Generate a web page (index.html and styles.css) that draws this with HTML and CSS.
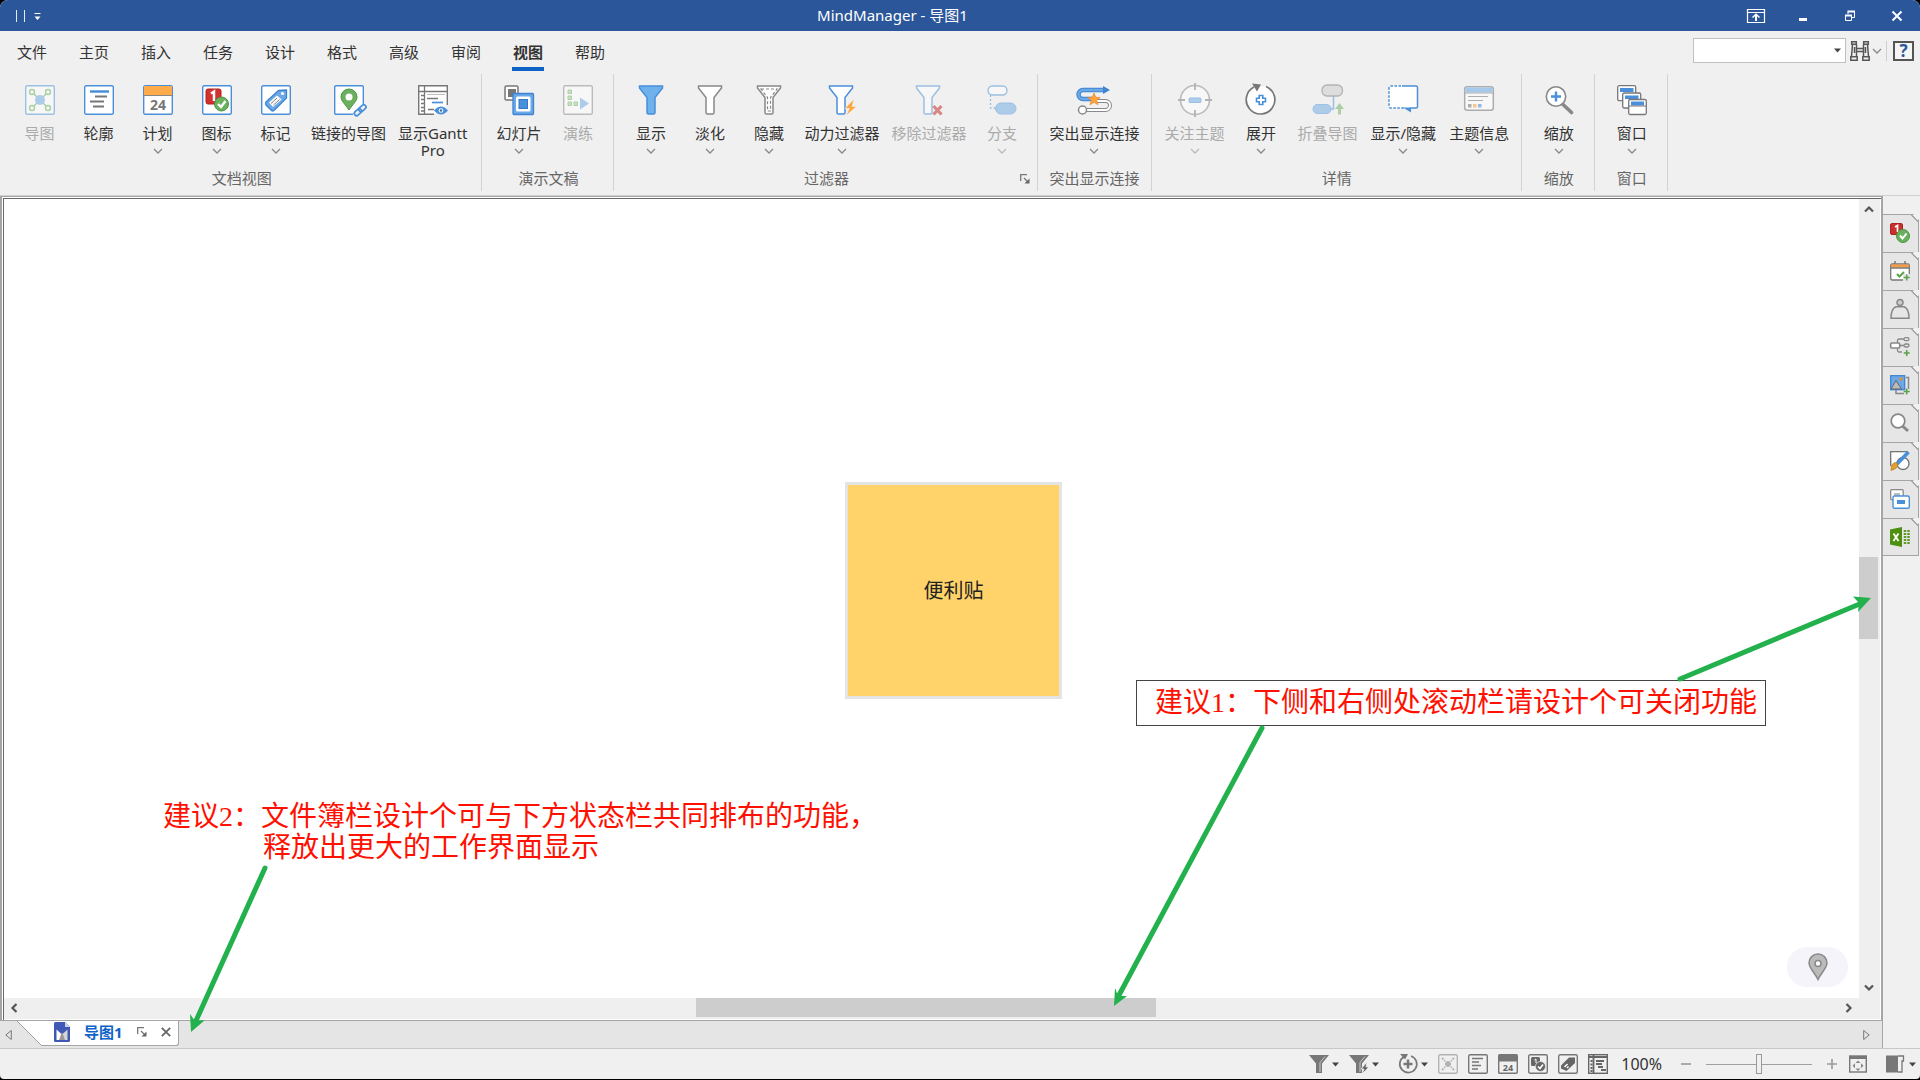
FILE: index.html
```
<!DOCTYPE html>
<html lang="zh-CN">
<head>
    <meta charset="UTF-8">
    <meta name="viewport" content="width=device-width, initial-scale=1.0">
    <title>MindManager - 导图1</title>
    <link rel="stylesheet" href="styles.css">
</head>
<body>

<!-- Shared small glyphs -->
<svg class="sprite" aria-hidden="true">
    <symbol id="chev" viewBox="0 0 10 6"><path d="M1 1l4 4 4-4" fill="none" stroke="currentColor" stroke-width="1.3"/></symbol>
    <symbol id="arrow" viewBox="0 0 10 8"><path d="M1 6.5l4-4 4 4" fill="none" stroke="#555" stroke-width="2.2"/></symbol>
    <symbol id="caret" viewBox="0 0 7 5"><path d="M0 .5h7L3.500 4.500z" fill="#444"/></symbol>
    <symbol id="popout" viewBox="0 0 10 10"><path d="M.7 7V.7H7M4 4l4 4" fill="none" stroke="#777" stroke-width="1.3"/><path d="M9.500 4.500v5h-5z" fill="#666"/></symbol>
    <symbol id="funnel" viewBox="0 0 26 30"><path d="M1.500 1h23v2L17 12.500V27.500q0 1.500-1.500 1.500h-5Q9 29 9 27.500V12.500L1.500 3z"/></symbol>
</svg>

<div class="app">
    <header class="titlebar">
        <div class="quick">
            <svg width="30" height="14" viewBox="0 0 30 14"><path d="M.5 1v12M8.500 1v12" stroke="#e5ebf5"/><path d="M18.500 4.500h6" stroke="#fff" stroke-width="1.2"/><path d="M18.500 7.500h6l-3 3.500z" fill="#fff"/></svg>
        </div>
        <h1 class="title">MindManager - 导图1</h1>
        <div class="window-buttons">
            <button aria-label="功能区显示选项"><svg width="18" height="14" viewBox="0 0 18 14" fill="none" stroke="#fff"><path d="M.5.5h17v13H.5zM.5 3.500h17" stroke-width="1.200"/><path d="M9 12V6" stroke-width="2"/><path d="M5.500 8.500L9 5.200l3.500 3.300" stroke-width="1.500"/></svg></button>
            <button aria-label="最小化"><svg width="10" height="12" viewBox="0 0 10 12"><path d="M1 8h8v3H1z" fill="#fff"/></svg></button>
            <button aria-label="还原"><svg width="12" height="12" viewBox="0 0 12 12" fill="none" stroke="#fff"><path d="M1.500 5.500h6v5h-6z"/><path d="M1 5.500h7" stroke-width="2"/><path d="M4 4V1.500h6.500v6H8"/><path d="M3.500 1.500h7.500" stroke-width="2"/></svg></button>
            <button aria-label="关闭"><svg width="12" height="12" viewBox="0 0 12 12"><path d="M1.500 1.500l9 9M10.500 1.500l-9 9" stroke="#fff" stroke-width="2"/></svg></button>
        </div>
    </header>

    <div class="menubar">
        <nav class="menu">
            <button>文件</button>
            <button>主页</button>
            <button>插入</button>
            <button>任务</button>
            <button>设计</button>
            <button>格式</button>
            <button>高级</button>
            <button>审阅</button>
            <button class="active">视图</button>
            <button>帮助</button>
        </nav>
        <div class="search">
            <div class="search-box">
                <input type="text" aria-label="查找">
                <button aria-label="查找历史"><svg width="7" height="5"><use href="#caret"/></svg></button>
            </div>
            <button class="find" aria-label="查找">
                <svg width="20" height="20" viewBox="0 0 20 20" fill="none" stroke="#555" stroke-width="1.500"><path d="M1.700.8h4.600v2.500H1.700zM13.700.8h4.600v2.500h-4.600zM2.500 3.500L1.500 15.500M6.500 3.500v12M17.500 3.500l1 12M13.500 3.500v12M.8 15.700h6.400v3.500H.8zM12.800 15.700h6.400v3.500h-6.400zM4.500 6v6M15.500 6v6M6 7.500h8M6 10.500h8"/></svg>
                <svg class="chev" width="10" height="6"><use href="#chev"/></svg>
            </button>
            <button class="help" aria-label="帮助">?</button>
        </div>
    </div>

    <div class="ribbon">
        <section class="group first">
            <div class="tools">
                <button class="tool" disabled>
                    <svg class="icon" viewBox="0 0 30 30"><rect x=".7" y=".7" width="28.600" height="28.600" rx="1.500" fill="#fff" stroke="#4a8fd9" stroke-width="1.400"/><g fill="none" stroke="#6bb05f" stroke-width="1.500"><path d="M9 9l12 12M21 9L9 21"/><circle cx="7" cy="7" r="2.500"/><circle cx="23" cy="7" r="2.500"/><circle cx="7" cy="23" r="2.500"/><circle cx="23" cy="23" r="2.500"/></g><circle cx="15" cy="15" r="5" fill="#6ba9e6"/></svg>
                    <span>导图</span>
                </button>
                <button class="tool">
                    <svg class="icon" viewBox="0 0 30 30"><rect x=".7" y=".7" width="28.600" height="28.600" rx="1.500" fill="#fff" stroke="#4a8fd9" stroke-width="1.400"/><path d="M6 6.500h19" stroke="#4a8fd9" stroke-width="2.500"/><path d="M11 11.500h12M6 16.500h14M9 21.500h11" stroke="#777" stroke-width="2"/></svg>
                    <span>轮廓</span>
                </button>
                <button class="tool">
                    <svg class="icon" viewBox="0 0 30 30"><rect x=".7" y=".7" width="28.600" height="28.600" rx="1.500" fill="#fff" stroke="#4a8fd9" stroke-width="1.400"/><path d="M1 1h28v9H1z" fill="#ffab4a"/><path d="M1 10.500h28" stroke="#888"/><text x="15" y="25" text-anchor="middle" class="cal-text">24</text></svg>
                    <span>计划</span>
                    <svg class="chev" width="10" height="6"><use href="#chev"/></svg>
                </button>
                <button class="tool">
                    <svg class="icon" viewBox="0 0 30 30"><rect x=".7" y=".7" width="28.600" height="28.600" rx="1.500" fill="#fff" stroke="#4a8fd9" stroke-width="1.400"/><rect x="4" y="4" width="15" height="15" rx="2" fill="#d2322d" stroke="#b3201c"/><path d="M9 8.500l3-2v9.500" fill="none" stroke="#fff" stroke-width="2.500"/><circle cx="19.500" cy="19" r="7" fill="#6bb05f" stroke="#4f9445"/><path d="M16 19l3 3 4.500-6" fill="none" stroke="#fff" stroke-width="2.400"/></svg>
                    <span>图标</span>
                    <svg class="chev" width="10" height="6"><use href="#chev"/></svg>
                </button>
                <button class="tool">
                    <svg class="icon" viewBox="0 0 30 30"><rect x=".7" y=".7" width="28.600" height="28.600" rx="1.500" fill="#fff" stroke="#4a8fd9" stroke-width="1.400"/><path d="M5 17L17.500 5.500l8-.5v8L13 25.500q-1.500 1-2.500 0L5 20q-1-1.500 0-3z" fill="#6ba9e6" stroke="#3f83d1" stroke-width="1.300"/><path d="M8 17.500l8-7 4.500 4-8.500 7.500z" fill="#fff"/><path d="M10 18.500l6-5.500M12.500 20l6-5.500" stroke="#777"/><circle cx="21.500" cy="8.500" r="1.600" fill="#fff"/></svg>
                    <span>标记</span>
                    <svg class="chev" width="10" height="6"><use href="#chev"/></svg>
                </button>
                <button class="tool">
                    <svg class="icon" viewBox="0 0 30 30"><path d="M19 29.300H2q-1.300 0-1.300-1.300V2Q.7.7 2 .7h26q1.300 0 1.300 1.300v17" fill="#fff" stroke="#4a8fd9" stroke-width="1.400"/><path d="M15 25C11 19 7 16 7 12a8 8 0 0 1 16 0c0 4-4 7-8 13z" fill="#6bb05f" stroke="#4f9445"/><circle cx="15" cy="12" r="3.500" fill="#fff"/><g fill="none" stroke="#4a8fd9" stroke-width="1.700" transform="rotate(-42 26 25)"><rect x="19" y="23" width="8" height="4.500" rx="2.200"/><rect x="25" y="23" width="8" height="4.500" rx="2.200"/></g></svg>
                    <span>链接的导图</span>
                </button>
                <button class="tool">
                    <svg class="icon" viewBox="0 0 30 30"><path d="M16 29.300H.7V.7h28.600V20" fill="#fff" stroke="#777" stroke-width="1.400"/><path d="M1 6.500h28M6.500 1v28" stroke="#777" stroke-width="1.300" fill="none"/><path d="M9 9.500h18" stroke="#bbb"/><path d="M3 10.500h3M3 14.500h3M3 18.500h3M3 22.500h3M3 26h3M9 13.500h11M10 24.500h6" stroke="#777" stroke-width="1.700"/><path d="M14 17.500h11" stroke="#4a8fd9" stroke-width="1.700"/><path d="M16 25.500q7-8 14 0-7 8-14 0z" fill="#4a8fd9"/><circle cx="23" cy="25.500" r="2.300" fill="#fff"/><circle cx="23" cy="25.500" r="1.200" fill="#2f6fb8"/></svg>
                    <span>显示Gantt<br>Pro</span>
                </button>
            </div>
            <h2>文档视图</h2>
        </section>

        <section class="group">
            <div class="tools">
                <button class="tool">
                    <svg class="icon" viewBox="0 0 30 30"><rect x="1" y="1" width="13" height="14" rx="1.500" fill="#fff" stroke="#777" stroke-width="1.500"/><rect x="4" y="4" width="8" height="8" fill="#777"/><rect x="9" y="8.500" width="20.500" height="21" rx="1" fill="#6ba9e6" stroke="#3f83d1" stroke-width="1.300"/><rect x="12" y="11.500" width="14.500" height="15" rx="1.500" fill="#fff"/><rect x="15" y="14.500" width="8.500" height="9" fill="#4a8fd9" stroke="#2f78cc"/></svg>
                    <span>幻灯片</span>
                    <svg class="chev" width="10" height="6"><use href="#chev"/></svg>
                </button>
                <button class="tool" disabled>
                    <svg class="icon" viewBox="0 0 30 30"><rect x=".7" y=".7" width="28.600" height="28.600" rx="1.500" fill="#fff" stroke="#888" stroke-width="1.400"/><g fill="#a5d29a" stroke="#6bb05f"><path d="M5 5h3.500v3.500H5zM5 11h3.500v3.500H5zM5 17h3.500v3.500H5zM11 17h3.500v3.500H11z"/></g><path d="M17 12.500l9 6-9 6z" fill="#6ba9e6"/></svg>
                    <span>演练</span>
                </button>
            </div>
            <h2>演示文稿</h2>
        </section>

        <section class="group">
            <div class="tools">
                <button class="tool">
                    <svg class="icon" viewBox="0 0 30 30"><use href="#funnel" x="2" width="26" height="30" fill="#6fb1ea" stroke="#4a8fd9" stroke-width="1.500"/></svg>
                    <span>显示</span>
                    <svg class="chev" width="10" height="6"><use href="#chev"/></svg>
                </button>
                <button class="tool">
                    <svg class="icon" viewBox="0 0 30 30"><use href="#funnel" x="2" width="26" height="30" fill="#fff" stroke="#888" stroke-width="1.500"/></svg>
                    <span>淡化</span>
                    <svg class="chev" width="10" height="6"><use href="#chev"/></svg>
                </button>
                <button class="tool">
                    <svg class="icon" viewBox="0 0 30 30"><use href="#funnel" x="2" width="26" height="30" fill="#fff" stroke="#888" stroke-width="1.500"/><path d="M7 4h16l-6.500 8.500V26h-3V12.500z" fill="none" stroke="#888" stroke-width="1.200" stroke-dasharray="3 2"/></svg>
                    <span>隐藏</span>
                    <svg class="chev" width="10" height="6"><use href="#chev"/></svg>
                </button>
                <button class="tool">
                    <svg class="icon" viewBox="0 0 30 30"><use href="#funnel" x="1" width="26" height="30" fill="#fff" stroke="#4a8fd9" stroke-width="1.500"/><path d="M27 14l-9 9.500h4.500L19 30.500l10.500-9H25z" fill="#ffa33a" stroke="#f0f0f0" stroke-width=".6"/></svg>
                    <span>动力过滤器</span>
                    <svg class="chev" width="10" height="6"><use href="#chev"/></svg>
                </button>
                <button class="tool" disabled>
                    <svg class="icon" viewBox="0 0 30 30"><use href="#funnel" x="1" width="26" height="30" fill="#fff" stroke="#4a8fd9" stroke-width="1.500"/><path d="M19.500 21l8 8.500M27.500 21l-8 8.500" stroke="#c4201c" stroke-width="3.200"/></svg>
                    <span>移除过滤器</span>
                </button>
                <button class="tool" disabled>
                    <svg class="icon" viewBox="0 0 30 30"><rect x="1" y="1" width="19" height="9" rx="4.500" fill="#fff" stroke="#4a8fd9" stroke-width="1.400"/><path d="M3.500 10v13H9" fill="none" stroke="#4a8fd9" stroke-width="1.300" stroke-dasharray="2 2"/><rect x="8.500" y="18" width="20.500" height="11" rx="5.500" fill="#6ba9e6" stroke="#4a8fd9"/></svg>
                    <span>分支</span>
                    <svg class="chev" width="10" height="6"><use href="#chev"/></svg>
                </button>
            </div>
            <h2>过滤器</h2>
            <button class="launcher" aria-label="过滤器选项"><svg width="10" height="10"><use href="#popout"/></svg></button>
        </section>

        <section class="group tight">
            <div class="tools">
                <button class="tool">
                    <svg class="icon" viewBox="0 0 30 30"><path d="M26 5H4a4.500 4.500 0 0 0 0 9H13" fill="none" stroke="#3f83d1" stroke-width="4.400"/><path d="M26 5H4a4.500 4.500 0 0 0 0 9H13" fill="none" stroke="#6ba9e6" stroke-width="2.400"/><path d="M24 1l7 4-7 4z" fill="#3f83d1"/><path d="M17 16h9.500a4.500 4.500 0 0 1 0 9H4" fill="none" stroke="#888" stroke-width="4"/><path d="M17 16h9.500a4.500 4.500 0 0 1 0 9H4" fill="none" stroke="#fff" stroke-width="2"/><circle cx="3.500" cy="25" r="4" fill="#fff" stroke="#888" stroke-width="1.500"/><path d="M15 8l1.700 4.200 4.500.3-3.500 2.800 1.200 4.400-3.900-2.400-3.900 2.400 1.200-4.400-3.500-2.800 4.500-.3z" fill="#ffa33a" stroke="#e8862a" stroke-width=".7"/></svg>
                    <span>突出显示连接</span>
                    <svg class="chev" width="10" height="6"><use href="#chev"/></svg>
                </button>
            </div>
            <h2>突出显示连接</h2>
        </section>

        <section class="group spaced">
            <div class="tools">
                <button class="tool" disabled>
                    <svg class="icon" viewBox="0 0 30 30"><circle cx="15" cy="15" r="14.500" fill="#fff" stroke="#888" stroke-width="1.600"/><path d="M15-2v7M15 25v7M-2 15h7M25 15h7" stroke="#777" stroke-width="1.800"/><rect x="9" y="13" width="12" height="4.500" rx="1" fill="#6ba9e6" stroke="#4a8fd9"/></svg>
                    <span>关注主题</span>
                    <svg class="chev" width="10" height="6"><use href="#chev"/></svg>
                </button>
                <button class="tool">
                    <svg class="icon" viewBox="0 0 30 30"><path d="M20 1.500a14.300 14.300 0 1 1-12 .5" fill="#fff" stroke="#777" stroke-width="1.700"/><path d="M6-1.500l9 1-4 7z" fill="#777"/><path d="M13.200 10.500h3.600v2.700h2.700v3.600h-2.700v2.700h-3.600v-2.700h-2.700v-3.600h2.700z" fill="#fff" stroke="#4a8fd9" stroke-width="1.600"/></svg>
                    <span>展开</span>
                    <svg class="chev" width="10" height="6"><use href="#chev"/></svg>
                </button>
                <button class="tool" disabled>
                    <svg class="icon" viewBox="0 0 30 30"><path d="M20.500 11v13H17" fill="none" stroke="#4a8fd9" stroke-width="1.500"/><rect x="9" y="0" width="20.500" height="11" rx="5" fill="#ccc" stroke="#777" stroke-width="1.300"/><rect x="0" y="19.500" width="18" height="9" rx="4.500" fill="#6ba9e6" stroke="#4a8fd9"/><path d="M26.500 18l4.500 6h-3v5.500h-3V24h-3z" fill="#6bb05f"/></svg>
                    <span>折叠导图</span>
                </button>
                <button class="tool">
                    <svg class="icon" viewBox="0 0 30 30"><path d="M1 2.500Q1 1 3 1h25q2 0 2 2v18q0 2-2 2H3q-2 0-2-2z" fill="#fff"/><path d="M13 1H3Q1 1 1 3v18q0 2 2 2h13" fill="none" stroke="#4a8fd9" stroke-width="1.500" stroke-dasharray="2.500 1.500"/><path d="M14 1h14q1.500 0 1.500 1.500v19q0 1.500-1.500 1.500h-6" fill="none" stroke="#4a8fd9" stroke-width="1.500"/><path d="M15 22.500h8v5z" fill="#4a8fd9"/></svg>
                    <span>显示/隐藏</span>
                    <svg class="chev" width="10" height="6"><use href="#chev"/></svg>
                </button>
                <button class="tool">
                    <svg class="icon faded" viewBox="0 0 30 30"><rect x=".7" y="1.700" width="28.600" height="23.600" rx="2.500" fill="#fff" stroke="#777" stroke-width="1.500"/><path d="M1.500 2.500h27v5h-27z" fill="#6ba9e6"/><path d="M1 8h28M4 11.500h20M4 15.500h15" stroke="#777"/><path d="M4 19h3.500v3.500H4z" fill="#777"/><path d="M9 19h3.500v3.500H9z" fill="#ffa33a"/><path d="M14 19h3.500v3.500H14z" fill="#4a8fd9"/></svg>
                    <span>主题信息</span>
                    <svg class="chev" width="10" height="6"><use href="#chev"/></svg>
                </button>
            </div>
            <h2>详情</h2>
        </section>

        <section class="group">
            <div class="tools">
                <button class="tool">
                    <svg class="icon" viewBox="0 0 30 30"><path d="M18.500 19l9 8.500" stroke="#888" stroke-width="3.600" stroke-linecap="round"/><circle cx="12" cy="11.500" r="9.700" fill="#fff" stroke="#888" stroke-width="1.600"/><path d="M12 6.500v10M7 11.500h10" stroke="#4a8fd9" stroke-width="2.400"/></svg>
                    <span>缩放</span>
                    <svg class="chev" width="10" height="6"><use href="#chev"/></svg>
                </button>
            </div>
            <h2>缩放</h2>
        </section>

        <section class="group">
            <div class="tools">
                <button class="tool">
                    <svg class="icon" viewBox="0 0 30 30"><g fill="#fff" stroke="#777" stroke-width="1.300"><rect x=".7" y=".7" width="18" height="15" rx="1.500"/><path d="M3 3h13.500v4H3z" fill="#4a8fd9" stroke="none"/><rect x="5.700" y="8" width="18" height="15" rx="1.500"/><path d="M8 10.500h13.500v3.500H8z" fill="#4a8fd9" stroke="none"/><rect x="11.700" y="14.500" width="17.600" height="15" rx="1.500"/></g><path d="M14 16.500h13v4H14z" fill="#4a8fd9"/><path d="M12 21h17" stroke="#777"/></svg>
                    <span>窗口</span>
                    <svg class="chev" width="10" height="6"><use href="#chev"/></svg>
                </button>
            </div>
            <h2>窗口</h2>
        </section>
    </div>

    <div class="workspace">
        <div class="document">
            <div class="frame">
                <main class="canvas">
                    <div class="sticky">便利贴</div>
                    <p class="note boxed">建议1：下侧和右侧处滚动栏请设计个可关闭功能</p>
                    <p class="note plain">建议2：文件簿栏设计个可与下方状态栏共同排布的功能，<br><span class="indent">释放出更大的工作界面显示</span></p>
                    <button class="locate" aria-label="定位"><svg width="22" height="28" viewBox="0 0 22 28"><path d="M11 26.500C8 20 2 15 2 10a9 9 0 0 1 18 0c0 5-6 10-9 16.500z" fill="#bbb" stroke="#8a8a8a" stroke-width="1.500"/><circle cx="11" cy="10.500" r="3" fill="#fff" stroke="#8a8a8a" stroke-width="1.600"/></svg></button>
                    <!-- hand drawn arrows run over the scrollbars -->
                    <svg class="arrows" width="1876" height="880" viewBox="4 200 1876 880">
                        <g stroke="#22b14c" stroke-width="5" stroke-linecap="round"><path d="M1680 680L1862 604"/><path d="M1262 729L1118 998"/><path d="M265 869L195 1024"/></g>
                        <g fill="#22b14c"><path d="M1871 599l-18-1.500 6 6.500-1 9z"/><path d="M1114 1007l1-18 3 8 9 0z"/><path d="M191 1033l-1-18 5 7 10-1z"/></g>
                    </svg>
                </main>
                <div class="scroll-v">
                    <button aria-label="向上滚动"><svg width="10" height="8"><use href="#arrow"/></svg></button>
                    <div class="track"><div class="thumb"></div></div>
                    <button class="down" aria-label="向下滚动"><svg width="10" height="8"><use href="#arrow"/></svg></button>
                </div>
                <div class="scroll-h">
                    <button class="left" aria-label="向左滚动"><svg width="10" height="8"><use href="#arrow"/></svg></button>
                    <div class="track"><div class="thumb"></div></div>
                    <button class="right" aria-label="向右滚动"><svg width="10" height="8"><use href="#arrow"/></svg></button>
                </div>
            </div>
            <div class="doc-tabs">
                <button class="page" aria-label="上一个"><svg width="7" height="12" viewBox="0 0 7 12"><path d="M6.300 1.500v9L.8 6z" fill="none" stroke="#777"/></svg></button>
                <svg class="slope" width="26" height="25" viewBox="0 0 26 25"><path d="M0 0L24.500 24.500H26V0z" fill="#fff"/><path d="M0 0L24.500 24.500H26" fill="none" stroke="#a0a0a0"/></svg>
                <div class="doc-tab">
                    <svg width="16" height="20" viewBox="0 0 16 20"><path d="M1.500 0H11l5 5v13.500q0 1.500-1.500 1.500h-13Q0 20 0 18.500v-17Q0 0 1.500 0z" fill="#3f57b5"/><path d="M11 0v5h5z" fill="#c9d1ee"/><path d="M2.500 7.500l5.500 5v5.500H2.500z" fill="#fff"/><path d="M13.500 7.500l-5.500 5v5.500h5.500z" fill="#d5d5d5"/><path d="M8 10l-3 8h6z" fill="#999"/></svg>
                    <a href="#">导图1</a>
                    <button aria-label="弹出"><svg width="10" height="10"><use href="#popout"/></svg></button>
                    <button aria-label="关闭导图"><svg width="10" height="10" viewBox="0 0 10 10"><path d="M.8.8l8.400 8.400M9.200.8L.8 9.200" stroke="#666" stroke-width="1.800"/></svg></button>
                </div>
                <button class="page next" aria-label="下一个"><svg width="7" height="12" viewBox="0 0 7 12"><path d="M.7 1.500v9L6.200 6z" fill="none" stroke="#777"/></svg></button>
            </div>
        </div>

        <aside class="side">
            <button aria-label="图标"><svg viewBox="0 0 20 20"><rect x=".5" y=".5" width="12" height="11" rx="1.500" fill="#c9302c" stroke="#a82420"/><path d="M5 4l2.500-1.500V9" fill="none" stroke="#fff" stroke-width="1.700"/><circle cx="13" cy="13" r="6.500" fill="#6bb05f" stroke="#4f9445"/><path d="M10 12.500l2.500 3 4-5" fill="none" stroke="#fff" stroke-width="2"/></svg></button>
            <button aria-label="任务信息"><svg viewBox="0 0 20 20"><rect x=".7" y="3" width="18.600" height="16" rx="1.500" fill="#fff" stroke="#777" stroke-width="1.300"/><path d="M1 3.500h18v3H1z" fill="#f79a45"/><path d="M1 7h18M5 0v3M15 0v3" stroke="#777" stroke-width="1.500"/><path d="M7 13l2.500 2.500L14 11" fill="none" stroke="#5aa34c" stroke-width="2"/><path d="M13 13h7v7h-7z" fill="#e6e6e6"/><path d="M16.700 13.500v6M13.700 16.500h6" stroke="#5aa34c" stroke-width="1.600"/></svg></button>
            <button aria-label="资源"><svg viewBox="0 0 20 20" fill="none" stroke="#888" stroke-width="1.500"><circle cx="10" cy="3.500" r="3" fill="#ccc"/><path d="M1 19.200q0-9.500 5-11.500h8q5 2 5 11.500z"/></svg></button>
            <button aria-label="导图部件"><svg viewBox="0 0 20 20" fill="none" stroke="#888" stroke-width="1.300"><rect x=".7" y="6" width="9" height="5" rx="1" fill="#fff" stroke-width="1.600"/><path d="M10 8.500h4M7.500 6V3.500Q7.500 2 9 2h5M7.500 11v2.500q0 1.500 1.500 1.500h3"/><rect x="14" y=".7" width="5" height="3" rx="1.500"/><rect x="14" y="7" width="5" height="3" rx="1.500"/><path d="M16.700 13v6M13.700 16h6" stroke="#5aa34c" stroke-width="1.600"/></svg></button>
            <button aria-label="图库"><svg viewBox="0 0 20 20"><path d="M6 15v3.500h8M16 2.500h2.500V14" fill="none" stroke="#888" stroke-width="1.500"/><rect x=".7" y=".7" width="14" height="14" fill="#6ba9e6" stroke="#3f83d1" stroke-width="1.300"/><path d="M1 14L6 5.500 11.500 14z" fill="#bbb" stroke="#666"/><circle cx="11" cy="4" r="1.700" fill="#e0922f"/><path d="M16.700 13.500v6M13.700 16.500h6" stroke="#5aa34c" stroke-width="1.600"/></svg></button>
            <button aria-label="搜索"><svg viewBox="0 0 20 20"><path d="M12.500 13l5.500 5" stroke="#888" stroke-width="3"/><circle cx="8" cy="8" r="6.800" fill="#fff" stroke="#888" stroke-width="1.700"/></svg></button>
            <button aria-label="主题样式"><svg viewBox="0 0 20 20"><path d="M.7 15V.7h17" fill="none" stroke="#777" stroke-width="1.400"/><path d="M1.500 1.500h15L2 16z" fill="#fff"/><circle cx="13" cy="12.500" r="6" fill="#fff" stroke="#777" stroke-width="1.400"/><path d="M18.500 1L7 13" stroke="#4a8fd9" stroke-width="3.600"/><path d="M7.500 12.500q1.500 5-6.500 7 0-7 4-8z" fill="#e0a030" stroke="#b77b1c" stroke-width=".7"/></svg></button>
            <button aria-label="幻灯片"><svg viewBox="0 0 20 20"><rect x=".7" y=".7" width="12.500" height="10" rx="1" fill="#fff" stroke="#888" stroke-width="1.300"/><path d="M4 4h6v4H4z" fill="#bbb"/><rect x="3" y="7" width="16.300" height="12.300" rx="1.500" fill="#fff" stroke="#4a8fd9" stroke-width="1.400"/><path d="M7 11h8v4H7z" fill="#4a8fd9"/></svg></button>
            <button aria-label="Excel"><svg viewBox="0 0 20 20"><path d="M0 2.500L12 0v20L0 17.500z" fill="#4f8f10"/><path d="M3.500 6.500l5 7.500M8.500 6.500l-5 7.500" stroke="#fff" stroke-width="1.800"/><path d="M15 3v14M18.500 3v14" stroke="#5f9b25" stroke-width="2.500" stroke-dasharray="2 1"/></svg></button>
        </aside>
    </div>

    <footer class="status">
        <button aria-label="过滤器"><svg width="20" height="20" viewBox="0 0 20 20"><path d="M0 1h20l-7 8.500V19H7V9.500z" fill="#777"/><path d="M16 2.500l-5 6V18" fill="none" stroke="#ccc"/></svg><svg width="7" height="5"><use href="#caret"/></svg></button>
        <button aria-label="动力过滤器"><svg width="20" height="20" viewBox="0 0 20 20"><path d="M0 1h20l-7 8.500V19H7V9.500z" fill="#777"/><path d="M16 2.500l-5 6V18" fill="none" stroke="#ccc"/><path d="M18 8l-6 7h3l-2 5 7-7h-3z" fill="#666" stroke="#f0f0f0" stroke-width=".8"/></svg><svg width="7" height="5"><use href="#caret"/></svg></button>
        <button class="expand" aria-label="展开"><svg width="20" height="20" viewBox="0 0 20 20" fill="none" stroke="#777"><path d="M13 2a8.500 8.500 0 1 1-7 .7" stroke-width="1.700"/><path d="M10 5.500v9M5.500 10h9" stroke-width="2.500"/><path d="M2 0h8L7 5.500z" fill="#777" stroke="none"/></svg><svg width="7" height="5"><use href="#caret"/></svg></button>
        <button aria-label="导图" disabled><svg width="20" height="20" viewBox="0 0 20 20" fill="none" stroke="#777"><rect x=".7" y=".7" width="18.600" height="18.600" rx="1.500" stroke-width="1.400"/><path d="M4 4l3 3M16 4l-3 3M4 16l3-3M16 16l-3-3" stroke-width="2" stroke-dasharray="2 1"/><circle cx="10" cy="10" r="3" fill="#777" stroke="none"/></svg></button>
        <button aria-label="轮廓"><svg width="20" height="20" viewBox="0 0 20 20" fill="none" stroke="#777"><rect x=".7" y=".7" width="18.600" height="18.600" rx="1.500" stroke-width="1.400"/><path d="M4 4.500h11M4 8h7M4 11.500h9M4 15h6" stroke-width="1.400"/></svg></button>
        <button aria-label="计划"><svg width="20" height="20" viewBox="0 0 20 20"><rect x=".7" y=".7" width="18.600" height="18.600" rx="1" fill="none" stroke="#777" stroke-width="1.400"/><path d="M1 1h18v6.500H1z" fill="#777"/><text x="10" y="16.500" text-anchor="middle" class="cal-small">24</text></svg></button>
        <button aria-label="图标"><svg width="20" height="20" viewBox="0 0 20 20"><rect x=".7" y=".7" width="18.600" height="18.600" rx="1.500" fill="none" stroke="#777" stroke-width="1.400"/><rect x="3" y="3" width="9" height="9" rx="1.500" fill="#666"/><path d="M6.500 6l1.500-1v4" fill="none" stroke="#fff"/><circle cx="12.500" cy="12.500" r="5" fill="#666" stroke="#f0f0f0" stroke-width=".7"/><path d="M10 12.500l2 2 3-4" fill="none" stroke="#fff" stroke-width="1.600"/></svg></button>
        <button aria-label="标记"><svg width="20" height="20" viewBox="0 0 20 20"><rect x=".7" y=".7" width="18.600" height="18.600" rx="1.500" fill="none" stroke="#777" stroke-width="1.400"/><path d="M3 11.500L11 3.500h6V9l-8.500 8L3 14.500z" fill="#666"/><path d="M6.500 13l3-3M9 14l1.500-1.500" stroke="#fff" stroke-width="1.500"/></svg></button>
        <button aria-label="Gantt"><svg width="20" height="20" viewBox="0 0 20 20"><rect x=".7" y=".7" width="18.600" height="18.600" fill="none" stroke="#666" stroke-width="1.400"/><path d="M1 3h18M5.500 1v18" stroke="#666" stroke-width="1.800"/><path d="M2.500 7h2M2.500 10.500h2M2.500 14h2M2.500 17h2M8 7h8M8 10h6M10 13h5M13 16h5" stroke="#666" stroke-width="1.800"/></svg></button>
        <span class="percent">100%</span>
        <div class="zoom">
            <button aria-label="缩小"><svg width="10" height="10" viewBox="0 0 10 10"><path d="M0 5h10" stroke="#999" stroke-width="1.600"/></svg></button>
            <input type="range" min="0" max="100" value="50" aria-label="缩放比例">
            <button aria-label="放大"><svg width="10" height="10" viewBox="0 0 10 10"><path d="M0 5h10M5 0v10" stroke="#999" stroke-width="1.600"/></svg></button>
        </div>
        <button aria-label="适合窗口"><svg width="18" height="18" viewBox="0 0 18 18"><rect x=".7" y="1" width="16.600" height="16" fill="none" stroke="#777" stroke-width="1.400"/><path d="M1 1h16v3H1z" fill="#777"/><path d="M9 5.500l2.500 2.500h-5zM9 16l2.500-2.500h-5zM3.500 10.700L6 8.200v5zM14.500 10.700L12 8.200v5z" fill="#888"/></svg></button>
        <button class="panel" aria-label="任务窗格"><svg width="20" height="20" viewBox="0 0 20 20"><path d="M0 1.500h12v17H0z" fill="#777"/><path d="M12 2h5.500v5H16v11h-4" fill="none" stroke="#777" stroke-width="1.300"/></svg><svg width="7" height="5"><use href="#caret"/></svg></button>
    </footer>
</div>

</body>
</html>
```
FILE: styles.css
```
* {
    box-sizing: border-box;
}
body {
    margin: 0;
    background: #000;
    font-family: "Noto Sans", "Noto Sans CJK SC", sans-serif;
    font-size: 15px;
    line-height: 17px;
    color: #333;
}
button {
    margin: 0;
    padding: 0;
    border: none;
    background: none;
    font: inherit;
    color: inherit;
    cursor: pointer;
}
h1, h2, p {
    margin: 0;
    font-weight: normal;
}
svg {
    display: block;
    overflow: visible;
    flex: none;
}
.sprite {
    position: absolute;
    width: 0;
    height: 0;
}
.app {
    display: flex;
    flex-direction: column;
    height: calc(100vh - 1px);
    background: #f0f0f0;
    border-radius: 8px 8px 4px 4px;
    overflow: hidden;
}

/* Title bar */
.titlebar {
    display: flex;
    align-items: center;
    height: 31px;
    background: #2b579a;
    color: #fff;
}
.quick {
    width: 53px;
    padding-left: 16px;
}
.title {
    flex: 1;
    text-align: center;
    font-size: 15px;
}
.window-buttons {
    display: flex;
}
.window-buttons button {
    display: grid;
    place-items: center;
    width: 47px;
    height: 31px;
}

/* Menu row */
.menubar {
    display: flex;
    justify-content: space-between;
    height: 41px;
    padding-left: 1px;
}
.menu {
    display: flex;
}
.menu button {
    position: relative;
    width: 62px;
    height: 41px;
    padding-top: 2px;
}
.menu .active {
    font-weight: bold;
}
.menu .active::after {
    content: "";
    position: absolute;
    left: 15px;
    right: 15px;
    bottom: 1px;
    height: 4px;
    background: #0f62c8;
}
.search {
    display: flex;
    align-items: center;
    gap: 4px;
    padding: 0 6px 2px 0;
}
.search-box {
    display: flex;
    width: 153px;
    height: 25px;
    background: #fff;
    border: 1px solid #c0c0c0;
}
.search-box input {
    flex: 1;
    min-width: 0;
    border: none;
    outline: none;
    background: none;
}
.search-box button {
    display: grid;
    place-items: center;
    width: 16px;
}
.find {
    display: flex;
    align-items: center;
    gap: 2px;
    padding-right: 4px;
    border-right: 1px solid #d0d0d0;
}
.help {
    width: 21px;
    height: 20px;
    margin-left: 2px;
    border: 2px solid #555;
    background: #f5f5f5;
    color: #2b579a;
    font-size: 17px;
    font-weight: bold;
    line-height: 16px;
}

/* Ribbon */
.ribbon {
    display: flex;
    padding: 2px 0 4px;
    border-bottom: 1px solid #d0d0d0;
}
.group {
    position: relative;
    display: flex;
    flex-direction: column;
    height: 117px;
    padding: 0 6px 0 7px;
    border-right: 1px solid #d2d2d2;
}
.group.first {
    padding: 0 8px 0 10px;
}
.group.tight {
    padding: 0 5px;
}
.group h2 {
    text-align: center;
    font-size: 15px;
    color: #666;
}
.tools {
    display: flex;
    height: 96px;
}
.spaced .tools {
    gap: 1px;
}
.tool {
    display: flex;
    flex-direction: column;
    align-items: center;
    min-width: 59px;
    padding: 11px 6px 0;
}
.icon {
    width: 30px;
    height: 30px;
    margin-bottom: 10px;
}
.icon.faded {
    opacity: .55;
}
.chev {
    color: #888;
}
.tool .chev {
    margin-top: 6px;
}
.tool:disabled {
    color: #aaa;
}
.tool:disabled svg {
    opacity: .5;
}
.cal-text {
    font-size: 14px;
    font-weight: bold;
    fill: #777;
}
.cal-small {
    font-size: 9px;
    font-weight: bold;
    fill: #666;
}
.launcher {
    position: absolute;
    right: 7px;
    bottom: 7px;
}

/* Workspace */
.workspace {
    flex: 1;
    display: flex;
    min-height: 0;
}
.document {
    flex: 1;
    display: flex;
    flex-direction: column;
    min-width: 0;
    background: #e5e5e5;
}
.frame {
    flex: 1;
    display: grid;
    grid-template-columns: 1fr 21px;
    grid-template-rows: 1fr 21px;
    min-height: 0;
    padding: 2px 1px 1px 2px;
    background: #efefef;
    border: solid #a5a5a5;
    border-width: 1px 2px 1px 2px;
    box-shadow: inset 1px 1px #fff, inset 2px 2px #696969, inset -1px -1px #fff;
}
.canvas {
    position: relative;
    background: #fff;
}
.scroll-v, .scroll-h {
    display: flex;
    background: #efefef;
}
.scroll-v {
    flex-direction: column;
}
.scroll-h .track, .scroll-v .track {
    flex: 1;
    display: flex;
}
.scroll-v .track {
    flex-direction: column;
}
.scroll-v button, .scroll-h button {
    display: grid;
    place-items: center;
    width: 20px;
    height: 20px;
}
.down svg {
    transform: rotate(180deg);
}
.left svg {
    transform: rotate(-90deg);
}
.right svg {
    transform: rotate(90deg);
}
.thumb {
    background: #cdcdcd;
}
.scroll-v .thumb {
    width: 19px;
    height: 82px;
    margin-top: 338px;
}
.scroll-h .thumb {
    width: 460px;
    height: 19px;
    margin-left: 37%;
}
.sticky {
    position: absolute;
    left: 841px;
    top: 283px;
    display: grid;
    place-items: center;
    width: 217px;
    height: 217px;
    background: #ffd36a;
    border: 3px solid #e4e4e4;
    font-size: 20px;
    color: #222;
}
.note {
    position: absolute;
    color: #ff1000;
    font-family: "Liberation Serif", "Noto Sans CJK SC", serif;
    font-size: 28px;
    line-height: 31px;
    white-space: nowrap;
}
.note.boxed {
    left: 1132px;
    top: 481px;
    width: 630px;
    padding: 6px 0 7px 18px;
    border: 1px solid #444;
}
.note.plain {
    left: 159px;
    top: 602px;
}
.indent {
    padding-left: 100px;
}
.arrows {
    position: absolute;
    left: 0;
    top: 0;
    z-index: 2;
    pointer-events: none;
}
.locate {
    position: absolute;
    right: 11px;
    bottom: 11px;
    display: grid;
    place-items: center;
    width: 61px;
    height: 40px;
    background: #f4f4fa;
    border-radius: 20px;
}

/* Document tabs */
.doc-tabs {
    display: flex;
    align-items: flex-start;
    height: 27px;
    border-right: 1px solid #a5a5a5;
}
.page {
    display: grid;
    place-items: center;
    width: 17px;
    height: 27px;
}
.page.next {
    width: 32px;
    margin-left: auto;
}
.doc-tab {
    display: flex;
    align-items: center;
    gap: 14px;
    height: 25px;
    padding: 0 7px 2px 11px;
    background: #fff;
    border: solid #a5a5a5;
    border-width: 0 1px 1px 0;
    border-radius: 0 0 3px 0;
}
.doc-tab a {
    color: #0f62c8;
    font-weight: bold;
    text-decoration: none;
}

/* Side tabs */
.side {
    width: 37px;
    padding-top: 18px;
}
.side button {
    display: grid;
    place-items: center;
    width: 36px;
    height: 38px;
    padding: 0 1px 1px 0;
    border: solid #a5a5a5;
    border-width: 1px 1px 0 0;
    background: linear-gradient(225deg, #f0f0f0 4px, #a5a5a5 4px, #a5a5a5 5px, #e6e6e6 5px);
    clip-path: polygon(0 0, 30px 0, 36px 6px, 36px 100%, 0 100%);
}
.side button:last-child {
    border-bottom-width: 1px;
}
.side svg {
    width: 20px;
    height: 20px;
}

/* Status bar */
.status {
    display: flex;
    align-items: center;
    justify-content: flex-end;
    gap: 10px;
    height: 31px;
    padding-right: 4px;
    border-top: 1px solid #c8c8c8;
}
.status button {
    display: flex;
    align-items: center;
    gap: 3px;
}
.status button:disabled {
    opacity: .5;
}
.status .expand, .status .panel {
    margin-left: 9px;
}
.percent {
    margin-left: 3px;
    font-size: 16px;
}
.zoom {
    display: flex;
    align-items: center;
    gap: 15px;
    margin: 0 2px 0 9px;
}
.zoom input {
    width: 106px;
    height: 20px;
    margin: 0;
    appearance: none;
    background: linear-gradient(#a0a0a0, #a0a0a0) center / 100% 1px no-repeat;
}
.zoom input::-webkit-slider-thumb {
    appearance: none;
    width: 6px;
    height: 20px;
    background: #f0f0f0;
    border: 1px solid #999;
}
```
